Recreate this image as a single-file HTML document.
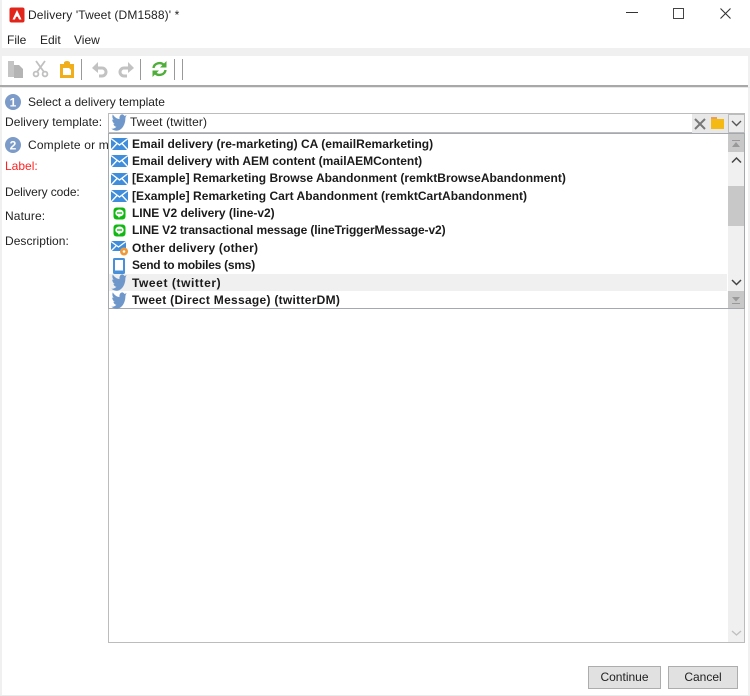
<!DOCTYPE html>
<html><head><meta charset="utf-8"><style>
html,body{margin:0;padding:0;background:#fff}
#p{position:relative;width:750px;height:696px;overflow:hidden;background:#fff;font-family:"Liberation Sans",sans-serif;font-size:12px;color:#222;filter:blur(.3px)}
#p div{position:absolute}
.t{white-space:nowrap;line-height:16px;height:16px}
.r{white-space:nowrap;line-height:16px;height:16px;left:132px;font-weight:bold;color:#1a1a1a;font-size:12px}
svg{position:absolute;overflow:visible}
.btn{background:#e1e1e1;border:1px solid #adadad;box-sizing:border-box;text-align:center;line-height:21px;height:23px;top:665.500px;color:#222}
</style></head><body><div id="p">
<div style="left:0;top:0;width:2px;height:696px;background:#f0f0f0"></div>
<div style="left:748px;top:48px;width:2px;height:648px;background:#f0f0f0"></div>
<div style="left:0;top:695px;width:750px;height:1px;background:#eaeaea"></div>

<svg style="left:9px;top:7px" width="16" height="16" viewBox="0 0 16 16"><rect width="15" height="15" x=".5" y=".5" rx="2" fill="#e1251b"/><path d="M8 3 L12.500 12.500 H10 L8.900 9.800 H6.600 L8 7 L6 12.500 H3.500 Z" fill="#fff"/></svg>
<div class="t" style="left:28px;top:7px;letter-spacing:.13px">Delivery 'Tweet (DM1588)' *</div>
<svg style="left:626px;top:12px" width="12" height="2"><rect width="12" height="1" fill="#333"/></svg>
<div style="left:673px;top:8px;width:9px;height:9px;border:1px solid #444"></div>
<svg style="left:720px;top:8px" width="11" height="11"><path d="M.5 .5 L10.500 10.500 M10.500 .5 L.5 10.500" stroke="#333" stroke-width="1.100"/></svg>

<div class="t" style="left:7px;top:32px">File</div>
<div class="t" style="left:40px;top:32px">Edit</div>
<div class="t" style="left:74px;top:32px">View</div>

<div style="left:0;top:48px;width:750px;height:8px;background:#f0f0f0"></div>
<div style="left:0;top:85px;width:748px;height:2px;background:#a8a8a8"></div>
<div style="left:0;top:87px;width:750px;height:1px;background:#e8e8e8"></div>

<svg style="left:8px;top:60px" width="16" height="18"><path d="M0 1H6V17H0Z" fill="#c4c4c4"/><path d="M6 5H11L15 9V18H6Z" fill="#b4b4b4"/></svg>
<svg style="left:33px;top:61px" width="16" height="17" fill="none" stroke="#c0c0c0" stroke-width="1.800"><path d="M3 0 L11 11 M12 0 L4 11"/><circle cx="3" cy="13" r="2.400"/><circle cx="12" cy="13" r="2.400"/></svg>
<svg style="left:60px;top:61px" width="14" height="17"><path d="M0 3H4V1.500A3 1.500 0 0 1 10 1.500V3H14V17H0Z" fill="#f0ae1a"/><path d="M3 7H9L11 9V14H3Z" fill="#fff"/></svg>
<div style="left:81px;top:59px;width:1px;height:21px;background:#999"></div>
<svg style="left:92px;top:62px" width="17" height="15" fill="none" stroke="#c2c2c2" stroke-width="3"><path d="M3 6H10A4 4 0 0 1 10 14H7"/><path d="M6 0 L0 6 L6 11Z" fill="#c2c2c2" stroke="none"/></svg>
<svg style="left:117px;top:62px" width="17" height="15" fill="none" stroke="#c2c2c2" stroke-width="3"><path d="M14 6H7A4 4 0 0 0 7 14H10"/><path d="M11 0 L17 6 L11 11Z" fill="#c2c2c2" stroke="none"/></svg>
<div style="left:140px;top:59px;width:1px;height:21px;background:#999"></div>
<svg style="left:152px;top:61px" width="15" height="16" fill="none" stroke="#4fae3a" stroke-width="2.400"><path d="M1.500 7A6 5.500 0 0 1 12 4"/><path d="M13.500 9A6 5.500 0 0 1 3 12"/><path d="M14.500 0V6.500H8Z" fill="#4fae3a" stroke="none"/><path d="M.5 16V9.500H7Z" fill="#4fae3a" stroke="none"/></svg>
<div style="left:174px;top:59px;width:1px;height:21px;background:#999"></div>
<div style="left:182px;top:59px;width:1px;height:21px;background:#999"></div>

<svg style="left:5px;top:94px" width="16" height="16"><circle cx="8" cy="8" r="8" fill="#7c9bc8"/><text x="8" y="12.500" text-anchor="middle" font-family="Liberation Sans" font-weight="bold" font-size="12" fill="#fff">1</text></svg>
<div class="t" style="left:28px;top:94px;letter-spacing:-.02px">Select a delivery template</div>
<div class="t" style="left:5px;top:114px;letter-spacing:.06px">Delivery template:</div>

<svg style="left:5px;top:137px" width="16" height="16"><circle cx="8" cy="8" r="8" fill="#7c9bc8"/><text x="8" y="12.500" text-anchor="middle" font-family="Liberation Sans" font-weight="bold" font-size="12" fill="#fff">2</text></svg>
<div class="t" style="left:28px;top:137px;width:80px;overflow:hidden;letter-spacing:.17px">Complete or modify</div>
<div class="t" style="left:5px;top:158px;color:#f22">Label:</div>
<div class="t" style="left:5px;top:184px;letter-spacing:-.1px">Delivery code:</div>
<div class="t" style="left:5px;top:208px;letter-spacing:.12px">Nature:</div>
<div class="t" style="left:5px;top:233px;letter-spacing:.04px">Description:</div>

<!-- combo -->
<div style="left:108px;top:113px;width:637px;height:20px;border:1px solid #bcbcbc;box-sizing:border-box;background:#fff"></div>
<div style="left:692px;top:114px;width:36px;height:19px;background:#e8e8e8"></div>
<div style="left:728px;top:114px;width:17px;height:19px;background:#ececec;border:1px solid #bcbcbc;box-sizing:border-box"></div>
<svg style="left:111px;top:114px" width="16" height="17" viewBox="0 1.200 16 12.400" preserveAspectRatio="none"><use href="#tw"/></svg>
<div class="t" style="left:130px;top:114px;letter-spacing:.12px">Tweet (twitter)</div>
<svg style="left:694px;top:118px" width="12" height="12"><path d="M1 1 L11 11 M11 1 L1 11" stroke="#777" stroke-width="2"/></svg>
<svg style="left:711px;top:117px" width="13" height="12"><path d="M0 0H6V3H0Z" fill="#e8a060"/><rect y="2" width="13" height="10" fill="#f5b914"/></svg>
<svg style="left:731px;top:120px" width="11" height="7"><path d="M1 1 L5.500 5.500 L10 1" fill="none" stroke="#555" stroke-width="1.400"/></svg>

<!-- lower panel -->
<div style="left:108px;top:308px;width:637px;height:335px;border:1px solid #bcbcbc;border-top:0;box-sizing:border-box;background:#fff"></div>
<div style="left:728px;top:309px;width:16px;height:333px;background:#f0f0f0"></div>
<svg style="left:731px;top:630px" width="11" height="7"><path d="M1 1 L5.500 5 L10 1" fill="none" stroke="#c0c0c0" stroke-width="1.400"/></svg>

<!-- list -->
<div style="left:108px;top:133px;width:637px;height:176px;border:1px solid #a4a9ad;box-sizing:border-box;background:#fff"></div>
<div style="left:109px;top:274px;width:618px;height:17px;background:#f0f0f0"></div>
<div style="left:728px;top:134px;width:16px;height:174px;background:#f0f0f0"></div>
<div style="left:728px;top:134px;width:16px;height:18px;background:#c8c8c8"></div>
<div style="left:728px;top:186px;width:16px;height:40px;background:#c8c8c8"></div>
<div style="left:728px;top:291px;width:16px;height:17px;background:#c8c8c8"></div>
<svg style="left:731px;top:140px" width="10" height="8"><path d="M1 0H9V1H1Z M5 2 L9 7H1Z" fill="#999"/></svg>
<svg style="left:731px;top:296px" width="10" height="8"><path d="M1 7H9V8H1Z M5 5.500 L9 1H1Z" fill="#999"/></svg>
<svg style="left:731px;top:157px" width="11" height="7"><path d="M1 5.500 L5.500 1 L10 5.500" fill="none" stroke="#444" stroke-width="1.500"/></svg>
<svg style="left:731px;top:279px" width="11" height="7"><path d="M1 1 L5.500 5.500 L10 1" fill="none" stroke="#444" stroke-width="1.500"/></svg>

<svg width="0" height="0" style="left:0;top:0"><defs>
<g id="tw"><path d="M16 3 C15.400 3.400 14.800 3.500 14.200 3.600 C14.800 3.200 15.300 2.600 15.500 1.800 C14.900 2.200 14.200 2.500 13.400 2.600 C12.900 2 12.100 1.500 11.200 1.500 C9.500 1.500 8.100 3 8.500 4.900 C5.800 4.800 3.400 3.500 1.800 1.500 C1 2.900 1.400 4.600 2.700 5.500 C2.200 5.500 1.700 5.300 1.200 5.100 C1.200 6.600 2.300 7.900 3.800 8.200 C3.300 8.300 2.900 8.300 2.400 8.300 C2.800 9.600 4 10.500 5.400 10.500 C4 11.600 2.200 12.100 .4 11.900 C1.800 12.800 3.500 13.400 5.300 13.400 C11.200 13.400 14.600 8.400 14.400 3.900 C15 3.500 15.600 3.300 16 3Z" fill="#6f97c9"/></g>
<g id="ml"><rect y="1" width="17" height="12" fill="#3f8ddb"/><path d="M0 1.500 L8.500 8 L17 1.500 M0 13 L6 6.500 M17 13 L11 6.500" fill="none" stroke="#fff" stroke-width="1.400"/></g>
<g id="ln"><rect x="1.500" y="1.500" width="12" height="12" rx="3" fill="#12b812"/><ellipse cx="7.500" cy="7" rx="4.200" ry="3.500" fill="#fff"/><path d="M5.500 9 L7 12 L8.500 9Z" fill="#fff"/><path d="M5 7H10" stroke="#12b812" stroke-width="1.300"/></g>
</defs></svg>

<svg style="left:111px;top:137px" width="17" height="14"><use href="#ml"/></svg>
<svg style="left:111px;top:154px" width="17" height="14"><use href="#ml"/></svg>
<svg style="left:111px;top:172px" width="17" height="14"><use href="#ml"/></svg>
<svg style="left:111px;top:189px" width="17" height="14"><use href="#ml"/></svg>
<svg style="left:112px;top:206px" width="16" height="16"><use href="#ln"/></svg>
<svg style="left:112px;top:223px" width="16" height="16"><use href="#ln"/></svg>
<svg style="left:111px;top:240px" width="17" height="16"><rect y="1" width="15" height="10" fill="#3f8ddb"/><path d="M0 1.500 L7.500 7 L15 1.500 M0 11 L5 6" fill="none" stroke="#fff" stroke-width="1.300"/><circle cx="13" cy="11.500" r="4" fill="#ee9a3a"/><circle cx="13" cy="11.500" r="1.300" fill="#fff"/></svg>
<svg style="left:113px;top:258px" width="12" height="16"><rect width="12" height="16" rx="1.500" fill="#4a90d9"/><rect x="2" y="2" width="8" height="10.500" fill="#fff"/></svg>
<svg style="left:111px;top:274px" width="16" height="17" viewBox="0 1.200 16 12.400" preserveAspectRatio="none"><use href="#tw"/></svg>
<svg style="left:111px;top:291.500px" width="16" height="17" viewBox="0 1.200 16 12.400" preserveAspectRatio="none"><use href="#tw"/></svg>

<div class="r" style="top:136px;letter-spacing:.03px">Email delivery (re-marketing) CA (emailRemarketing)</div>
<div class="r" style="top:153px;letter-spacing:-.03px">Email delivery with AEM content (mailAEMContent)</div>
<div class="r" style="top:170px;letter-spacing:.035px">[Example] Remarketing Browse Abandonment (remktBrowseAbandonment)</div>
<div class="r" style="top:188px;letter-spacing:.035px">[Example] Remarketing Cart Abandonment (remktCartAbandonment)</div>
<div class="r" style="top:205px;letter-spacing:-.03px">LINE V2 delivery (line-v2)</div>
<div class="r" style="top:222px;letter-spacing:-.1px">LINE V2 transactional message (lineTriggerMessage-v2)</div>
<div class="r" style="top:240px;letter-spacing:.19px">Other delivery (other)</div>
<div class="r" style="top:257px;letter-spacing:-.24px">Send to mobiles (sms)</div>
<div class="r" style="top:275px;letter-spacing:.58px">Tweet (twitter)</div>
<div class="r" style="top:292px;letter-spacing:.285px">Tweet (Direct Message) (twitterDM)</div>

<div class="btn" style="left:588px;width:73px">Continue</div>
<div class="btn" style="left:668px;width:70px">Cancel</div>
</div></body></html>
